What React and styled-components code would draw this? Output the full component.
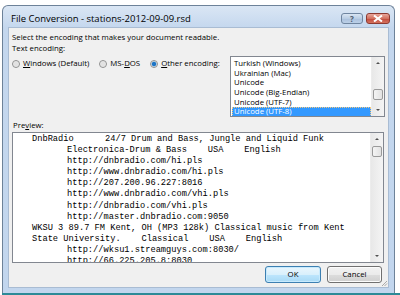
import React from "react";
import styled, { createGlobalStyle } from "styled-components";

const GlobalStyle = createGlobalStyle`
  html, body {
    margin: 0;
    padding: 0;
    background: #ffffff;
  }
`;

const encodings = [
  "Turkish (Windows)",
  "Ukrainian (Mac)",
  "Unicode",
  "Unicode (Big-Endian)",
  "Unicode (UTF-7)",
  "Unicode (UTF-8)",
];

const preview = [
  { text: "DnbRadio      24/7 Drum and Bass, Jungle and Liquid Funk" },
  { text: "Electronica-Drum & Bass    USA    English", indent: true },
  { text: "http://dnbradio.com/hi.pls", indent: true },
  { text: "http://www.dnbradio.com/hi.pls", indent: true },
  { text: "http://207.200.96.227:8016", indent: true },
  { text: "http://www.dnbradio.com/vhi.pls", indent: true },
  { text: "http://dnbradio.com/vhi.pls", indent: true },
  { text: "http://master.dnbradio.com:9050", indent: true },
  { text: "WKSU 3 89.7 FM Kent, OH (MP3 128k) Classical music from Kent" },
  { text: "State University.    Classical    USA    English" },
  { text: "http://wksu1.streamguys.com:8030/", indent: true },
  { text: "http://66.225.205.8:8030", indent: true },
];

function Radio({ checked, children }) {
  return (
    <RadioItem>
      <RadioDot checked={checked} />
      <span>{children}</span>
    </RadioItem>
  );
}

function Scrollbar({ thumbTop, thumbHeight }) {
  return (
    <Scroll>
      <Arrow>
        <Tri up />
      </Arrow>
      <Track>
        <Thumb style={{ marginTop: thumbTop, height: thumbHeight }} />
      </Track>
      <Arrow>
        <Tri />
      </Arrow>
    </Scroll>
  );
}

export default function App() {
  return (
    <Page>
      <GlobalStyle />
      <Window>
        <TitleBar>
          <Title>File Conversion - stations-2012-09-09.rsd</Title>
          <CaptionButtons>
            <HelpBtn>?</HelpBtn>
            <CloseBtn>
              <svg width="10" height="7" viewBox="0 0 10 7">
                <path
                  d="M1 0.5 L9 6.5 M9 0.5 L1 6.5"
                  stroke="#ffffff"
                  strokeWidth="2"
                  fill="none"
                />
              </svg>
            </CloseBtn>
          </CaptionButtons>
        </TitleBar>
        <Client>
          <Line>Select the encoding that makes your document readable.</Line>
          <Line>Text encoding:</Line>
          <EncodingRow>
            <RadioGroup>
              <Radio>
                <u>W</u>indows (Default)
              </Radio>
              <Radio>
                MS-<u>D</u>OS
              </Radio>
              <Radio checked>
                <u>O</u>ther encoding:
              </Radio>
            </RadioGroup>
            <ListBox>
              <ListItems>
                {encodings.map((e, i) => (
                  <ListItem key={e} selected={i === encodings.length - 1}>
                    {e}
                  </ListItem>
                ))}
              </ListItems>
              <Scrollbar thumbTop={20} thumbHeight={11} />
            </ListBox>
          </EncodingRow>
          <Label>
            Pre<u>v</u>iew:
          </Label>
          <PreviewBox>
            <PreviewText>
              {preview.map((l, i) => (
                <PreLine key={i} indent={l.indent}>
                  {l.text}
                </PreLine>
              ))}
            </PreviewText>
            <Scrollbar thumbTop={1} thumbHeight={11} />
          </PreviewBox>
          <ButtonRow>
            <DlgButton primary>OK</DlgButton>
            <DlgButton>Cancel</DlgButton>
            <Grip>
              <svg width="7" height="7" viewBox="0 0 7 7">
                <path d="M6 1 L1 6 M6 3.5 L3.5 6" stroke="#a8a8a8" strokeWidth="1" />
              </svg>
            </Grip>
          </ButtonRow>
        </Client>
      </Window>
      <Taskbar />
    </Page>
  );
}

const uiFont = `"Open Sans", "Noto Sans", sans-serif`;

const Page = styled.div`
  width: 400px;
  height: 295px;
  overflow: hidden;
  display: flex;
  flex-direction: column;
  padding: 5px 0 0 2px;
  box-sizing: border-box;
  font-family: ${uiFont};
  font-size: 7.8px;
  color: #000;
`;

const Window = styled.div`
  width: 393px;
  height: 288px;
  box-sizing: border-box;
  border: 1px solid #6d8299;
  border-bottom: none;
  border-radius: 6px 6px 0 0;
  background: linear-gradient(#dae6f4, #c4d7ee 22px, #c2d6ee);
  display: flex;
  flex-direction: column;
`;

const Taskbar = styled.div`
  height: 2px;
  width: 398px;
  background: #2c8a97;
`;

const TitleBar = styled.div`
  height: 21px;
  display: flex;
  align-items: flex-end;
  justify-content: space-between;
  padding: 0 4px 2px 8px;
`;

const Title = styled.div`
  font-size: 9.5px;
  line-height: 12px;
  color: #000;
`;

const CaptionButtons = styled.div`
  display: flex;
  gap: 3px;
  margin-bottom: 1px;
`;

const CapBtn = styled.div`
  height: 11px;
  box-sizing: border-box;
  border: 1px solid #6f85a0;
  border-radius: 3px;
  display: flex;
  align-items: center;
  justify-content: center;
`;

const HelpBtn = styled(CapBtn)`
  width: 22px;
  background: linear-gradient(#d9e5f3, #b9cde4 50%, #a9c0dc 51%, #bcd0e8);
  color: #4d5a6c;
  font-size: 8px;
  font-weight: bold;
  line-height: 9px;
`;

const CloseBtn = styled(CapBtn)`
  width: 24px;
  border-color: #8c3a32;
  background: linear-gradient(#e9a79c, #d2705f 50%, #c0473a 51%, #d5735f);
`;

const Client = styled.div`
  flex: 1;
  margin: 0 5px 5px 5px;
  background: #f0f0f0;
  border: 1px solid #a9bcd3;
  padding: 3px 3px 4px 3px;
  display: flex;
  flex-direction: column;
`;

const Line = styled.div`
  line-height: 11px;
  height: 11px;
  white-space: nowrap;
  &:first-child {
    margin-top: 1px;
  }
`;

const EncodingRow = styled.div`
  display: flex;
  justify-content: space-between;
  margin-top: 2px;
`;

const RadioGroup = styled.div`
  display: flex;
  gap: 10px;
  margin-top: 2px;
  height: 11px;
`;

const RadioItem = styled.div`
  display: flex;
  align-items: center;
  gap: 3px;
  line-height: 11px;
  white-space: nowrap;
`;

const RadioDot = styled.span`
  width: 8px;
  height: 8px;
  box-sizing: border-box;
  border-radius: 50%;
  border: 1px solid #8e8f8f;
  background: ${(p) =>
    p.checked
      ? "radial-gradient(circle, #1e74c4 0 1.8px, #8fc3ee 2.4px, #e8e8e8 2.8px)"
      : "radial-gradient(circle, #e2e2e2 0 2px, #f4f4f4 3px)"};
`;

const ListBox = styled.div`
  width: 155px;
  height: 61px;
  box-sizing: border-box;
  border: 1px solid #828790;
  background: #fff;
  display: flex;
  overflow: hidden;
`;

const ListItems = styled.div`
  flex: 1;
  padding-top: 2px;
  padding-left: 1px;
`;

const ListItem = styled.div`
  height: 9.7px;
  line-height: 9.7px;
  padding-left: 2px;
  white-space: nowrap;
  background: ${(p) => (p.selected ? "#3399ff" : "transparent")};
  color: ${(p) => (p.selected ? "#ffffff" : "#000")};
  outline: ${(p) => (p.selected ? "1px dotted #f4c980" : "none")};
  outline-offset: -1px;
`;

const Scroll = styled.div`
  width: 12px;
  display: flex;
  flex-direction: column;
  background: linear-gradient(90deg, #e8e8e8, #f4f4f4);
  border-left: 1px solid #ececec;
`;

const Arrow = styled.div`
  height: 12px;
  display: flex;
  align-items: center;
  justify-content: center;
`;

const Tri = styled.span`
  width: 0;
  height: 0;
  border-left: 2.5px solid transparent;
  border-right: 2.5px solid transparent;
  ${(p) =>
    p.up
      ? "border-bottom: 2.5px solid #505050;"
      : "border-top: 2.5px solid #505050;"}
`;

const Track = styled.div`
  flex: 1;
  display: flex;
  flex-direction: column;
  align-items: center;
`;

const Thumb = styled.div`
  width: 10px;
  box-sizing: border-box;
  border: 1px solid #9a9a9a;
  border-radius: 2px;
  background: linear-gradient(90deg, #f4f4f4, #e2e2e2);
`;

const Label = styled.div`
  line-height: 11px;
  height: 11px;
  margin-top: 3px;
  margin-left: 1px;
`;

const PreviewBox = styled.div`
  height: 131px;
  box-sizing: border-box;
  margin-top: 1px;
  margin-right: 1px;
  border: 1px solid #828790;
  background: #fff;
  display: flex;
  overflow: hidden;
`;

const PreviewText = styled.div`
  flex: 1;
  padding: 1px 0 0 19px;
  font-family: "Liberation Mono", "Courier New", monospace;
  font-size: 8.7px;
  overflow: hidden;
`;

const PreLine = styled.div`
  height: 11.1px;
  line-height: 11.1px;
  white-space: pre;
  padding-left: ${(p) => (p.indent ? "35px" : "0")};
`;

const ButtonRow = styled.div`
  display: flex;
  justify-content: flex-end;
  gap: 6px;
  margin-top: 3px;
  padding-right: 3px;
  position: relative;
`;

const DlgButton = styled.div`
  width: ${(p) => (p.primary ? "56px" : "55px")};
  height: 17px;
  box-sizing: border-box;
  border: 1px solid ${(p) => (p.primary ? "#3c7fb1" : "#707070")};
  border-radius: 3px;
  background: ${(p) =>
    p.primary
      ? "linear-gradient(#eaf6fd, #d9f0fc 50%, #bee6fd 51%, #a7d9f5)"
      : "linear-gradient(#f2f2f2, #ebebeb 50%, #dddddd 51%, #cfcfcf)"};
  box-shadow: inset 0 0 0 1px ${(p) => (p.primary ? "#c7eafd" : "#fcfcfc")};
  display: flex;
  align-items: center;
  justify-content: center;
  line-height: 11px;
`;

const Grip = styled.div`
  position: absolute;
  right: -3px;
  bottom: -4px;
  width: 7px;
  height: 7px;
  display: flex;
`;
